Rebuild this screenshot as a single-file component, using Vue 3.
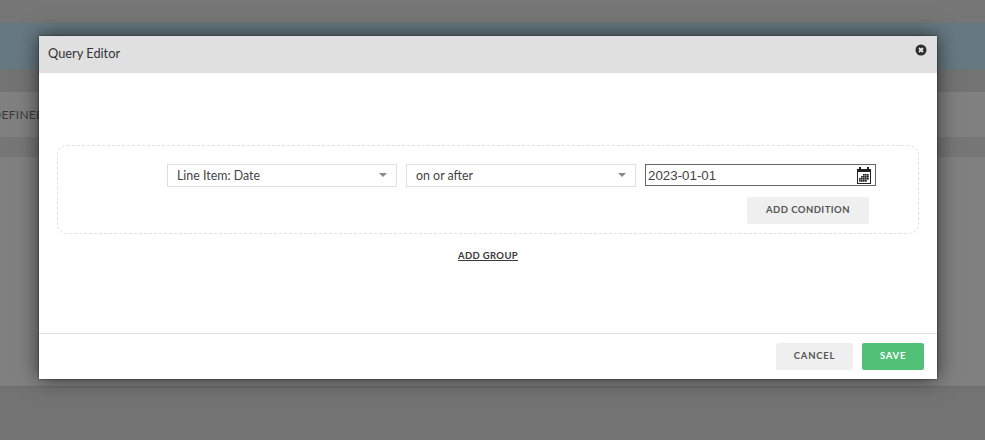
<script setup>
const gridCells = [
  [6, 7], [8, 7], [10, 7], [4, 9], [6, 9], [8, 9], [10, 9], [2, 11], [4, 11], [6, 11], [8, 11], [10, 11], [2, 13], [4, 13], [6, 13], [8, 13]
]
</script>

<template>
  <div class="page">
    <div class="backdrop">
      <div class="band top"></div>
      <div class="band teal"></div>
      <div class="band gap"></div>
      <div class="band tabs"><span class="tab-text">DEFINED</span></div>
      <div class="band gap2"></div>
      <div class="band content"></div>
      <div class="band bottom"></div>
    </div>

    <div class="modal">
      <header class="modal-head">
        <span class="modal-title">Query Editor</span>
        <svg class="close" width="12" height="12" viewBox="0 0 12 12" aria-label="Close">
          <circle cx="6" cy="6" r="5.5" fill="#2d2d2d" />
          <path d="M4 4l4 4M8 4l-4 4" stroke="#e8e8e8" stroke-width="1.8" />
        </svg>
      </header>

      <main class="modal-body">
        <section class="group">
          <div class="row">
            <div class="select">
              <span>Line Item: Date</span>
              <i class="caret"></i>
            </div>
            <div class="select">
              <span>on or after</span>
              <i class="caret"></i>
            </div>
            <div class="date">
              <span>2023-01-01</span>
              <svg class="cal" width="14" height="17" viewBox="0 0 14 17">
                <rect x="0" y="2" width="14" height="15" fill="#222" />
                <rect x="2" y="0" width="2" height="2" fill="#222" />
                <rect x="10" y="0" width="2" height="2" fill="#222" />
                <rect x="1" y="5" width="12" height="11" fill="#fff" />
                <rect v-for="(c, i) in gridCells" :key="i" :x="c[0]" :y="c[1]" width="1.7" height="1.7" fill="#222" />
              </svg>
            </div>
          </div>
          <div class="row-actions">
            <button class="btn btn-grey add-cond" type="button">ADD CONDITION</button>
          </div>
        </section>
        <div class="add-group-wrap">
          <a class="add-group">ADD GROUP</a>
        </div>
      </main>

      <footer class="modal-foot">
        <button class="btn btn-grey foot-btn cancel" type="button">CANCEL</button>
        <button class="btn btn-green foot-btn save" type="button">SAVE</button>
      </footer>
    </div>
  </div>
</template>

<style>
html, body { margin: 0; padding: 0; }
</style>

<style scoped>
.page {
  position: relative;
  width: 985px;
  height: 440px;
  overflow: hidden;
  font-family: Lato, "Open Sans", sans-serif;
}
.backdrop {
  display: flex;
  flex-direction: column;
  height: 440px;
  background: #737373;
}
.band { flex: none; box-sizing: border-box; }
.top { height: 23px; background: #767676; }
.teal {
  height: 46px;
  background: #667880;
  border-top: 1px solid #5f7a80;
  border-bottom: 1px solid #5f7f85;
}
.gap { height: 23px; background: #737373; }
.tabs {
  height: 45px;
  background: #808080;
  display: flex;
  align-items: center;
  justify-content: flex-start;
  overflow: hidden;
}
.tab-text {
  margin-left: -8px;
  font-size: 12px;
  letter-spacing: 0.3px;
  color: #3a3a3a;
}
.gap2 { height: 20px; background: #767676; }
.content { height: 229px; background: #808080; }
.bottom { height: 54px; background: #737373; border-top: 1px solid #6c6c6c; }

.modal {
  position: absolute;
  left: 39px;
  top: 36px;
  width: 898px;
  height: 343px;
  background: #fff;
  display: flex;
  flex-direction: column;
  box-shadow: 0 0 20px rgba(0, 0, 0, 0.6), 0 0 2px rgba(0, 0, 0, 0.6);
}
.modal-head {
  flex: none;
  box-sizing: border-box;
  height: 37px;
  background: #e0e0e0;
  display: flex;
  align-items: center;
  justify-content: space-between;
  padding: 0 10px 3px 9px;
}
.modal-title {
  font-size: 12.8px;
  color: #333;
}
.close { margin-top: -6px; }
.modal-body {
  flex: 1;
  padding: 72px 18px 0;
}
.group {
  box-sizing: border-box;
  height: 89px;
  border: 1px dashed #e0e0e0;
  border-radius: 10px;
  padding: 18px 42px 0 109px;
}
.row {
  display: flex;
  gap: 9px;
}
.select {
  box-sizing: border-box;
  width: 230px;
  height: 23px;
  border: 1px solid #e0e0e0;
  display: flex;
  align-items: center;
  justify-content: space-between;
  padding: 0 9px 1px;
  font-size: 12.4px;
  color: #444;
}
.caret {
  width: 0;
  height: 0;
  border-left: 4px solid transparent;
  border-right: 4px solid transparent;
  border-top: 4px solid #888;
}
.date {
  box-sizing: border-box;
  width: 231px;
  height: 22px;
  border: 1px solid #666;
  display: flex;
  align-items: center;
  justify-content: space-between;
  padding: 0 4px 0 2px;
  font-family: "Liberation Sans", Arial, sans-serif;
  font-size: 13.33px;
  color: #444;
}
.cal { margin-top: 1px; }
.row-actions {
  display: flex;
  justify-content: flex-end;
  margin-top: 10px;
  padding-right: 7px;
}
.btn {
  box-sizing: border-box;
  height: 27px;
  border: 0;
  border-radius: 2px;
  padding: 0 0 2px;
  font-family: Lato, "Open Sans", sans-serif;
  font-size: 9.5px;
  font-weight: 700;
  letter-spacing: 0.45px;
  cursor: pointer;
}
.btn-grey { background: #efefef; color: #555; }
.btn-green { background: #52c178; color: #fff; }
.add-cond { width: 122px; }
.add-group-wrap {
  display: flex;
  justify-content: center;
  margin-top: 16px;
}
.add-group {
  font-size: 9.5px;
  font-weight: 700;
  letter-spacing: 0.35px;
  color: #3a3a3a;
  text-decoration: underline;
}
.modal-foot {
  flex: none;
  box-sizing: border-box;
  height: 46px;
  border-top: 1px solid #e0e0e0;
  display: flex;
  justify-content: flex-end;
  align-items: flex-start;
  gap: 9px;
  padding: 9px 13px 0 0;
}
.foot-btn { letter-spacing: 0.75px; }
.cancel { width: 77px; }
.save { width: 62px; }
</style>
